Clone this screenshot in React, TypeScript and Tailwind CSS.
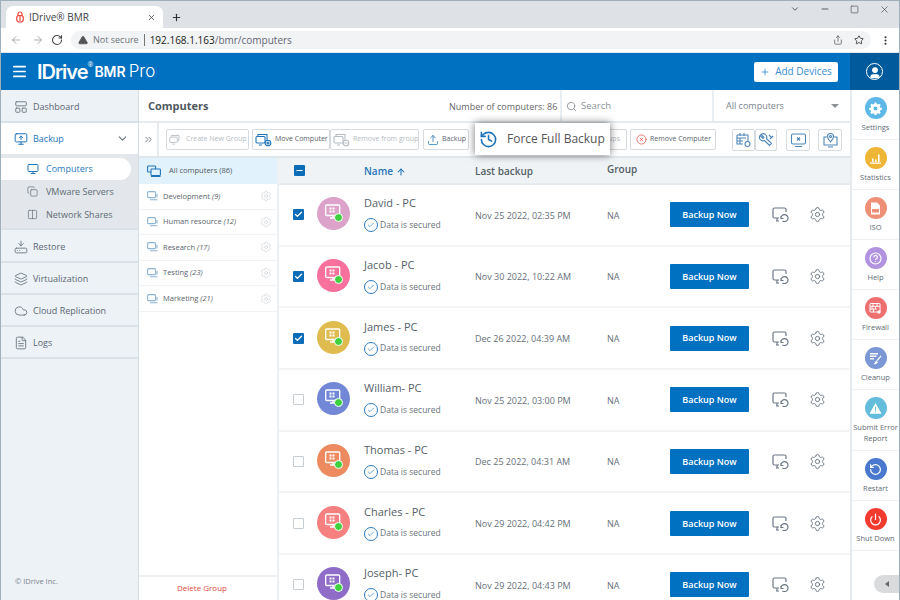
import React from 'react';
import { ArrowLeft, ArrowRight, RotateCw, TriangleAlert, X, Plus, ChevronDown, Minus, Square, Star, Share, EllipsisVertical, Menu, LayoutPanelTop, MonitorUp, Monitor, Copy, Columns2, HardDriveDownload, Layers, Cloud, FileText, ChevronsRight, Search, Settings, ArrowUp, Check, CircleX, Upload, History, RotateCcw, Power, User } from 'lucide-react';

const rows = [
  ['David - PC', 'Nov 25 2022, 02:35 PM', 'bg-[#dca2c9]', true],
  ['Jacob - PC', 'Nov 30 2022, 10:22 AM', 'bg-[#f8709c]', true],
  ['James - PC', 'Dec 26 2022, 04:39 AM', 'bg-[#e0bb4f]', true],
  ['William- PC', 'Nov 25 2022, 03:00 PM', 'bg-[#7288d6]', false],
  ['Thomas - PC', 'Dec 25 2022, 04:31 AM', 'bg-[#ee8a5f]', false],
  ['Charles - PC', 'Nov 29 2022, 04:42 PM', 'bg-[#f67f7f]', false],
  ['Joseph- PC', 'Nov 29 2022, 04:43 PM', 'bg-[#8f6cc8]', false],
] as const;

const groups = [['Development', '(9)'], ['Human resource', '(12)'], ['Research', '(17)'], ['Testing', '(23)'], ['Marketing', '(21)']];

const g = { width: 13, height: 13, viewBox: '0 0 13 13' };
const GearGlyph = () => (
  <svg {...g} fill="#fff"><path fillRule="evenodd" d="M5.500 0.500h2l.3 1.600 1.100.5 1.400-.9 1.400 1.400-.9 1.400.5 1.100 1.600.3v2l-1.600.3-.5 1.100.9 1.400-1.400 1.400-1.400-.9-1.100.5-.3 1.600h-2l-.3-1.600-1.100-.5-1.400.9-1.400-1.400.9-1.400-.5-1.100-1.600-.3v-2l1.600-.3.5-1.100-.9-1.400 1.400-1.400 1.400.9 1.100-.5zM6.500 4.500a2 2 0 1 0 0 4 2 2 0 0 0 0-4z" /></svg>
);
const StatGlyph = () => (
  <svg {...g} fill="#fff"><path d="M1 10.500h11v1.200H1zM3 6.500h1.600v3.500H3zM6 7.500h1.600v2.500H6zM9 2.500h1.600v7.500H9z" /></svg>
);
const IsoGlyph = () => (
  <svg {...g} fill="#fff"><path fillRule="evenodd" d="M2 0.500h6l3 3v9H2zM3 7v3.500h7V7z" /></svg>
);
const HelpGlyph = () => (
  <svg {...g} fill="none" stroke="#fff" strokeWidth="1.200"><circle cx="6.500" cy="6.500" r="5.500" /><path d="M4.800 5.200a1.800 1.800 0 1 1 2.600 1.600c-.6.300-.9.600-.9 1.200M6.500 9.300v.8" /></svg>
);
const WallGlyph = () => (
  <svg {...g} fill="none" stroke="#fff" strokeWidth="1"><rect x="1" y="1.500" width="10" height="8.500" rx=".5" /><path d="M1 4.300h10M1 7.100h7M4 1.500v2.800M8 1.500v2.800M3 4.300v2.800M6.500 4.300v2.800M4.500 7.100v2.900" /><circle cx="10" cy="10" r="1.700" fill="#fff" stroke="none" /></svg>
);
const CleanGlyph = () => (
  <svg {...g} fill="#fff"><path d="M1 1h8v1.400H1zM1 3.600h6.500V5H1zM1 6.200h4V7.600H1z" /><path d="M11.500 3.500l1 .8-3.800 4.700-1-.8z" /><path d="M7 8.500l2 1.500c-.6 1.600-2 2.300-4.500 2.300 1-.8 1.700-2.200 2.500-3.800z" /></svg>
);
const WarnGlyph = () => (
  <svg {...g} fill="#fff"><path fillRule="evenodd" d="M6.500 1L12.500 11.800H.5zM6 5v3.600h1V5zM6 9.500v1h1v-1z" /></svg>
);
const RestartGlyph = () => <RotateCcw size={13} strokeWidth={2.2} className="text-white" />;
const PowerGlyph = () => <Power size={13} strokeWidth={2.2} className="text-white" />;

const rail = [
  { label: ['Settings'], bg: 'bg-[#5db8e8]', Icon: GearGlyph },
  { label: ['Statistics'], bg: 'bg-[#eeb537]', Icon: StatGlyph },
  { label: ['ISO'], bg: 'bg-[#ee8f78]', Icon: IsoGlyph },
  { label: ['Help'], bg: 'bg-[#b193e0]', Icon: HelpGlyph },
  { label: ['Firewall'], bg: 'bg-[#ee6f70]', Icon: WallGlyph },
  { label: ['Cleanup'], bg: 'bg-[#7b97d6]', Icon: CleanGlyph },
  { label: ['Submit Error', 'Report'], bg: 'bg-[#63bddb]', Icon: WarnGlyph },
  { label: ['Restart'], bg: 'bg-[#4a78cf]', Icon: RestartGlyph },
  { label: ['Shut Down'], bg: 'bg-[#f23a2f]', Icon: PowerGlyph },
];

function TwoScreens({ color, badge, w = 17 }: { color: string; badge?: 'gear' | 'minus'; w?: number }) {
  return (
    <svg width={w} height="14" viewBox="0 0 17 14" fill="none" stroke={color} strokeWidth="1.100" className="shrink-0">
      <path d="M3 3V1.500h9v6.500h-1" />
      <rect x="1" y="3.500" width="9" height="6.500" rx="1" />
      <path d="M4 12h3" />
      {badge && <circle cx="13" cy="10" r="2.800" fill="#fff" />}
      {badge === 'gear' && <circle cx="13" cy="10" r="1" />}
      {badge === 'minus' && <path d="M11.500 10h3" />}
    </svg>
  );
}

function NavItem({ Icon, label, h = 'h-[32px]' }: { Icon: any; label: string; h?: string }) {
  return (
    <div className={`${h} shrink-0 flex items-center pt-[2px] pl-[13px] gap-[5px] border-b-2 border-[#d9e2e9] text-[9px] font-medium text-[#5a6672]`}>
      <Icon size={14} strokeWidth={1.5} className="text-[#66757f]" />
      <span>{label}</span>
    </div>
  );
}

function ToolBtn({ icon, label, dim, w, cls = '' }: { icon: React.ReactNode; label: string; dim?: boolean; w: string; cls?: string }) {
  return (
    <div className={`${w} ${cls} h-[21px] shrink-0 flex items-center pl-[2px] gap-[3px] border border-[#d6dbe0] bg-white text-[7px] whitespace-nowrap overflow-hidden rounded-[2px] ${dim ? 'text-[#b5bcc2]' : 'text-[#59636c]'}`}>
      {icon}
      <span>{label}</span>
    </div>
  );
}

function IconBox({ children, w }: { children: React.ReactNode; w: string }) {
  return (
    <div className={`${w} h-[22px] flex items-center justify-center border border-[#d6dbe0] rounded-[2px] bg-white`}>
      <svg width="17" height="16" viewBox="0 0 17 16" fill="none" stroke="#4f86b8" strokeWidth="1.100">{children}</svg>
    </div>
  );
}

function PcGlyph({ color }: { color: string }) {
  return (
    <div className={`relative w-[33px] h-[33px] rounded-full ${color} shrink-0 -mt-[2px]`}>
      <svg width="16" height="15" viewBox="0 0 16 15" fill="none" className="absolute left-[8px] top-[7px]">
        <rect x="0.700" y="1" width="14" height="10.500" rx="1" stroke="#fff" strokeWidth="1.300" />
        <path d="M5 14h6M8 11.500V14" stroke="#fff" strokeWidth="1.300" />
        <path d="M4.500 3.500h2v2h-2zM7.500 3.500h2v2h-2zM4.500 6.500h2v2h-2zM7.500 6.500h2v2h-2z" fill="#fff" />
      </svg>
      <span className="absolute right-[7px] bottom-[8px] w-[9px] h-[9px] rounded-full bg-[#3fd03f] border border-white" />
    </div>
  );
}

export default function App() {
  return (
    <div className="w-[900px] h-[600px] overflow-hidden flex flex-col border-x border-t border-[#9fb0bd] bg-white font-['Open_Sans',sans-serif] text-[#555]">
      {/* browser tabs */}
      <div className="h-[27px] shrink-0 bg-[#dee1e6] flex items-end pl-[5px]">
        <div className="w-[157px] h-[22px] bg-white rounded-t-[7px] flex items-center pl-[10px] pr-[7px] text-[10px] text-[#3c4043]">
          <svg width="8" height="12" viewBox="0 0 8 12" fill="none" className="mr-[5px]"><rect x="0.700" y="4.500" width="6.600" height="6.500" rx="2.500" stroke="#e8453c" strokeWidth="1.200" /><path d="M2 5V3a2 2 0 0 1 4 0v2M4 5v5" stroke="#e8453c" strokeWidth="1.200" /></svg>
          <span className="flex-1">IDrive® BMR</span>
          <X size={9} strokeWidth={2} className="text-[#333]" />
        </div>
        <Plus size={11} strokeWidth={2.5} className="ml-[8px] mb-[5px] text-[#333]" />
        <div className="flex-1" />
        <div className="h-full flex items-center gap-[20px] pr-[9px] pb-[11px] text-[#444]">
          <ChevronDown size={10} />
          <Minus size={10} />
          <Square size={9} strokeWidth={1.6} />
          <X size={11} strokeWidth={1.4} />
        </div>
      </div>
      {/* address bar */}
      <div className="h-[25px] shrink-0 bg-white flex items-center pl-[9px] border-b border-[#e5e8eb]">
        <ArrowLeft size={12} className="text-[#a9adb2]" />
        <ArrowRight size={12} className="ml-[10px] text-[#a9adb2]" />
        <RotateCw size={12} strokeWidth={2.2} className="ml-[7px] text-[#444]" />
        <div className="ml-[8px] w-[800px] h-[18px] bg-[#f1f3f4] rounded-full flex items-center pl-[7px] pr-[7px] text-[9px]">
          <TriangleAlert size={10} fill="#555" className="text-[#555]" />
          <span className="ml-[5px] text-[#70757a]">Not secure</span>
          <span className="mx-[5px] h-[12px] w-px bg-[#777]" />
          <span className="text-[10px] text-[#222]">192.168.1.163</span>
          <span className="text-[10px] text-[#667]">/bmr/computers</span>
          <div className="flex-1" />
          <Share size={10} className="text-[#666] mr-[11px]" />
          <Star size={10} strokeWidth={2} className="text-[#333]" />
        </div>
        <EllipsisVertical size={11} strokeWidth={2.5} className="ml-[9px] text-[#333]" />
      </div>
      {/* app header */}
      <div className="h-[37px] shrink-0 bg-[#0070c0] flex items-center text-white">
        <Menu size={17} strokeWidth={2.4} className="ml-[10px]" />
        <span className="ml-[9px] font-['Inter',sans-serif] text-[20px] font-semibold tracking-[-1px] leading-none">IDrive</span>
        <span className="self-start mt-[8px] text-[7px] leading-none">®</span>
        <span className="ml-[1px] font-['Inter',sans-serif] text-[14px] font-semibold leading-none">BMR</span>
        <span className="ml-[3px] font-['Inter',sans-serif] text-[17px] font-light leading-none">Pro</span>
        <div className="flex-1" />
        <div className="w-[84px] h-[20px] mr-[12px] bg-white rounded-[2px] flex items-center justify-center gap-[5px] text-[10px] text-[#3b8cd0]">
          <Plus size={10} strokeWidth={2} />
          <span>Add Devices</span>
        </div>
        <div className="w-[49px] h-full bg-[#005a9c] flex items-center justify-center">
          <div className="w-[17px] h-[17px] rounded-full border-[1.5px] border-white flex items-center justify-center overflow-hidden">
            <User size={14} fill="#fff" className="text-white mt-[3px]" />
          </div>
        </div>
      </div>
      {/* body */}
      <div className="flex-1 min-h-0 flex">
        {/* sidebar */}
        <div className="w-[138px] shrink-0 bg-[#edf2f6] border-r border-[#d5dde4] flex flex-col">
          <NavItem Icon={LayoutPanelTop} label="Dashboard" h="h-[33px]" />
          <div className="h-[31px] shrink-0 bg-white flex items-center pl-[13px] pr-[9px] gap-[5px] text-[9px] font-medium text-[#1f74b8]">
            <MonitorUp size={14} strokeWidth={1.7} />
            <span className="flex-1">Backup</span>
            <ChevronDown size={13} className="text-[#66757f]" />
          </div>
          <div className="h-[76px] shrink-0 bg-[#e3e7eb] border-b-2 border-[#d9e2e9] pt-[4px] text-[9px] font-medium">
            <div className="w-[130px] h-[22px] bg-white rounded-r-full flex items-center pl-[26px] gap-[7px] text-[#2c7cc0]">
              <Monitor size={12} strokeWidth={2} className="text-[#1f74b8]" />
              <span>Computers</span>
            </div>
            <div className="h-[23px] flex items-center pl-[26px] gap-[8px] text-[#616c76]">
              <Copy size={11} strokeWidth={1.5} />
              <span>VMware Servers</span>
            </div>
            <div className="h-[23px] flex items-center pl-[26px] gap-[8px] text-[#616c76]">
              <Columns2 size={11} strokeWidth={1.5} />
              <span>Network Shares</span>
            </div>
          </div>
          <NavItem Icon={HardDriveDownload} label="Restore" h="h-[33px]" />
          <NavItem Icon={Layers} label="Virtualization" />
          <NavItem Icon={Cloud} label="Cloud Replication" />
          <NavItem Icon={FileText} label="Logs" />
          <div className="flex-1" />
          <div className="pl-[14px] pb-[13px] text-[7.5px] text-[#7b858e]">© IDrive Inc.</div>
        </div>
        {/* main */}
        <div className="relative flex-1 min-w-0 flex flex-col">
          <div className="h-[33px] shrink-0 flex items-center border-b-2 border-[#e6ebef]">
            <span className="ml-[9px] w-[301px] pt-[2px] text-[11px] font-bold text-[#4e5860]">Computers</span>
            <span className="w-[111px] pt-[2px] text-[9px] text-[#666]">Number of computers: 86</span>
            <div className="w-[154px] h-full border-x-2 border-[#e9eef2] flex items-center pt-[2px] pl-[4px] gap-[4px] text-[9.5px] text-[#8b9298]">
              <Search size={11} />
              <span>Search</span>
            </div>
            <div className="flex-1 flex items-center justify-between pl-[12px] pr-[11px] text-[9px] text-[#7c848b]">
              <span>All computers</span>
              <span className="w-0 h-0 border-x-[4px] border-x-transparent border-t-[4px] border-t-[#8a9197]" />
            </div>
          </div>
          <div className="h-[35px] shrink-0 flex items-center border-b-2 border-[#dfe6ec]">
            <div className="w-[20px] h-full border-r-2 border-[#e6ebef] flex items-center justify-center">
              <ChevronsRight size={11} className="text-[#6d7880]" />
            </div>
            <ToolBtn icon={<TwoScreens color="#b5bcc2" w={14} />} label="Create New Group" dim w="w-[83px]" cls="ml-[7px]" />
            <ToolBtn icon={<TwoScreens color="#1f74b8" badge="gear" />} label="Move Computer" w="w-[78px]" cls="ml-[3px]" />
            <ToolBtn icon={<TwoScreens color="#b5bcc2" badge="minus" />} label="Remove from group" dim w="w-[89px]" />
            <ToolBtn icon={<Upload size={12} strokeWidth={1.5} className="text-[#1f74b8] ml-[1px]" />} label="Backup" w="w-[46px]" cls="ml-[4px]" />
            <div className="w-[140px] shrink-0" />
            <div className="w-[18px] h-[21px] shrink-0 border border-l-0 border-[#d6dbe0] rounded-r-[2px] text-[7px] text-[#b5bcc2] flex items-center justify-end pr-[6px] whitespace-nowrap overflow-hidden">ups</div>
            <ToolBtn icon={<CircleX size={11} strokeWidth={1.5} className="text-[#e8483f] ml-[3px]" />} label="Remove Computer" w="w-[86px]" cls="ml-[3px]" />
            <div className="ml-[16px] flex shrink-0">
              <IconBox w="w-[23px]">
                <path d="M2 3h11v6M2 3v9h6M2 6h9M5 1v3M9 1v3M5 6v6M2 9h6" />
                <circle cx="12.500" cy="12" r="2.500" />
              </IconBox>
              <IconBox w="w-[22px]">
                <path d="M3 2.500l3 3-1 1-3-3a3.500 3.500 0 0 0 4.500 5l5 5 2-2-5-5a3.500 3.500 0 0 0-5.500-4z" />
                <path d="M11 3l3 3M12 7l3-3" />
              </IconBox>
            </div>
            <div className="ml-[9px] shrink-0">
              <IconBox w="w-[24px]">
                <rect x="1.500" y="2" width="14" height="10" rx="1.500" />
                <path d="M5 14.500h7M7 5.500l3 3M10 5.500l-3 3" />
              </IconBox>
            </div>
            <div className="ml-[8px] shrink-0">
              <IconBox w="w-[24px]">
                <path d="M5 5H2v8h13V5h-3M6 15h5" />
                <path d="M8.500 10C7 8 5.500 6.500 5.500 4.500a3 3 0 0 1 6 0c0 2-1.500 3.500-3 5.500z" />
                <circle cx="8.500" cy="4.500" r="1" />
              </IconBox>
            </div>
          </div>
          <div className="flex-1 min-h-0 flex">
            {/* groups */}
            <div className="w-[140px] shrink-0 border-r-2 border-[#eef1f4] flex flex-col">
              <div className="h-[26px] shrink-0 bg-[#e2f2fc] flex items-center pl-[8px] gap-[8px] text-[7.5px] font-medium text-[#4e5860]">
                <svg width="14" height="12" viewBox="0 0 14 12" fill="none" stroke="#1f74b8" strokeWidth="1.100" className="shrink-0">
                  <rect x="0.600" y="1" width="8" height="6" rx="0.800" />
                  <rect x="4" y="4" width="9.400" height="6.500" rx="0.800" fill="#e2f2fc" />
                  <path d="M4 11.500h9.500" />
                </svg>
                <span>All computers (86)</span>
              </div>
              {groups.map(([n, c]) => (
                <div key={n} className="h-[25.6px] shrink-0 border-b border-[#f1f3f5] flex items-center pl-[8px] pr-[5px] text-[7.5px] text-[#5a646d]">
                  <svg width="11" height="10" viewBox="0 0 11 10" fill="none" stroke="#8db4d3" strokeWidth="1.100" className="mr-[5px] shrink-0">
                    <rect x="0.600" y="0.600" width="8" height="6" rx="1.200" />
                    <path d="M3 8.700h7.500M10 3v3.500" />
                  </svg>
                  <span className="flex-1">{n} <i>{c}</i></span>
                  <Settings size={12} strokeWidth={1} className="text-[#c3c8cc]" />
                </div>
              ))}
              <div className="flex-1" />
              <div className="h-[25px] shrink-0 border-t-2 border-[#eef1f4] flex items-center justify-center pr-[12px] pb-[2px] text-[8px] text-[#e2483e]">Delete Group</div>
            </div>
            {/* table */}
            <div className="flex-1 min-w-0 overflow-hidden flex flex-col">
              <div className="h-[27px] shrink-0 bg-[#eff3f6] border-b-2 border-[#e6ebef] flex items-center">
                <span className="ml-[15px] w-[11px] h-[11px] bg-[#0c6cb8] rounded-[1px] flex items-center justify-center">
                  <Minus size={9} strokeWidth={3} className="text-white" />
                </span>
                <span className="ml-[59px] w-[111px] pt-[2px] flex items-center gap-[3px] text-[10px] font-semibold text-[#1f74b8]">Name <ArrowUp size={10} strokeWidth={2.5} /></span>
                <span className="w-[132px] pt-[2px] text-[10px] font-semibold text-[#555f68]">Last backup</span>
                <span className="text-[10px] font-semibold text-[#555f68] -mt-[3px]">Group</span>
              </div>
              {rows.map(([name, date, color, checked]) => (
                <div key={name} className="h-[61.7px] shrink-0 border-b-2 border-[#f2f4f6] flex items-center">
                  <span className={`ml-[14px] w-[11px] h-[11px] shrink-0 rounded-[1px] flex items-center justify-center ${checked ? 'bg-[#0c6cb8]' : 'bg-white border border-[#c5ccd2]'}`}>
                    {checked && <Check size={9} strokeWidth={3.5} className="text-white" />}
                  </span>
                  <div className="ml-[13px]"><PcGlyph color={color} /></div>
                  <div className="ml-[14px] w-[111px] shrink-0 mb-[2px]">
                    <div className="text-[11px] leading-[15px] text-[#555f68]">{name}</div>
                    <div className="mt-[8px] flex items-center gap-[2px] text-[8.5px] text-[#6a747c]">
                      <span className="w-[14px] h-[14px] rounded-full border-[1.5px] border-[#2c7cc0] flex items-center justify-center">
                        <Check size={8} strokeWidth={2} className="text-[#2c7cc0]" />
                      </span>
                      Data is secured
                    </div>
                  </div>
                  <span className="w-[132px] shrink-0 pt-[1px] text-[9px] text-[#667079]">{date}</span>
                  <span className="w-[63px] shrink-0 pt-[1px] text-[9px] text-[#667079]">NA</span>
                  <div className="w-[79px] h-[25px] shrink-0 bg-[#0070c0] rounded-[1px] flex items-center justify-center text-[9px] font-semibold text-white">Backup Now</div>
                  <svg className="ml-[23px] shrink-0" width="18" height="15" viewBox="0 0 18 15" fill="none" stroke="#6b7785" strokeWidth="1.200">
                    <path d="M7 11H2.500A1.500 1.500 0 0 1 1 9.500V2.500A1.500 1.500 0 0 1 2.500 1h10A1.500 1.500 0 0 1 14 2.500V5M4 14h3M5 11v3" />
                    <path d="M9 11.500a3.500 3.500 0 1 1 1.500 2.500M9 9v2.500h2.500" />
                  </svg>
                  <Settings size={17} strokeWidth={1.3} className="ml-[19px] shrink-0 text-[#66727f]" />
                </div>
              ))}
            </div>
          </div>
          {/* tooltip */}
          <div className="absolute left-[336px] top-[33px] w-[135px] h-[32px] bg-white shadow-[0_0_8px_rgba(0,0,0,0.55)] flex items-center pl-[4px] gap-[9px] text-[12px] text-[#555]">
            <History size={19} strokeWidth={2} className="text-[#1f74b8] shrink-0" />
            <span className="whitespace-nowrap">Force Full Backup</span>
          </div>
        </div>
        {/* right rail */}
        <div className="w-[49px] shrink-0 border-l-2 border-[#e6ebef] bg-white flex flex-col">
          {rail.map(({ label, bg, Icon }) => (
            <div key={label[0]} className="shrink-0 border-b border-[#eef1f4] flex flex-col items-center pt-[7px] pb-[6px] text-[7.5px] leading-[11px] text-[#636c74]">
              <span className={`w-[22px] h-[22px] rounded-full ${bg} flex items-center justify-center mb-[3px]`}>
                <Icon />
              </span>
              {label.map((l) => <span key={l} className="whitespace-nowrap">{l}</span>)}
            </div>
          ))}
          <div className="flex-1 flex items-end justify-end pb-[7px]">
            <div className="w-[25px] h-[18px] bg-[#d9dbdc] rounded-l-full flex items-center justify-center">
              <span className="w-0 h-0 border-y-[3.5px] border-y-transparent border-r-[4px] border-r-[#666]" />
            </div>
          </div>
        </div>
      </div>
    </div>
  );
}
